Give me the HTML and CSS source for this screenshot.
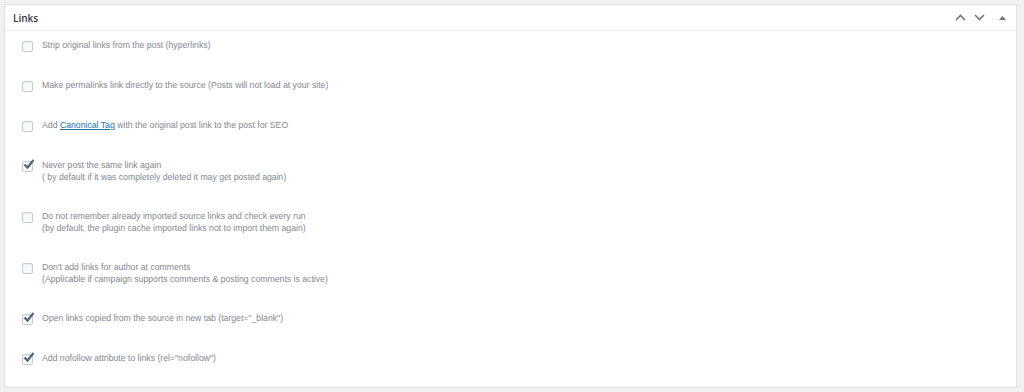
FILE: index.html
```html
<!DOCTYPE html>
<html>
<head>
<meta charset="utf-8">
<link rel="stylesheet" href="styles.css">
</head>
<body>
<div class="panel">
  <div class="panel-head">
    <h2 class="title">Links</h2>
    <div class="actions">
      <svg class="chev" width="11" height="7" viewBox="0 0 11 7"><path d="M1 6 L5.5 1.5 L10 6" fill="none" stroke="#72777c" stroke-width="1.6"/></svg>
      <svg class="chev" width="11" height="7" viewBox="0 0 11 7"><path d="M1 1 L5.5 5.5 L10 1" fill="none" stroke="#72777c" stroke-width="1.6"/></svg>
      <svg class="tri" width="7" height="4" viewBox="0 0 7 4"><path d="M0 4 L3.5 0 L7 4 Z" fill="#72777c"/></svg>
    </div>
  </div>
  <div class="panel-body">
    <div class="opt"><span class="box"></span><div class="label">Strip original links from the post (hyperlinks)</div></div>
    <div class="opt"><span class="box"></span><div class="label">Make permalinks link directly to the source (Posts will not load at your site)</div></div>
    <div class="opt"><span class="box"></span><div class="label">Add <a class="lnk" href="#">Canonical Tag</a> with the original post link to the post for SEO</div></div>
    <div class="opt"><span class="box checked"><svg width="12" height="11" viewBox="0 0 12 11"><path d="M1.5 5.5 L4.5 8.5 L10.5 1" fill="none" stroke="#50667a" stroke-width="2.2"/></svg></span><div class="label">Never post the same link again<br>( by default if it was completely deleted it may get posted again)</div></div>
    <div class="opt"><span class="box"></span><div class="label">Do not remember already imported source links and check every run<br>(by default, the plugin cache imported links not to import them again)</div></div>
    <div class="opt"><span class="box"></span><div class="label">Don't add links for author at comments<br>(Applicable if campaign supports comments &amp; posting comments is active)</div></div>
    <div class="opt"><span class="box checked"><svg width="12" height="11" viewBox="0 0 12 11"><path d="M1.5 5.5 L4.5 8.5 L10.5 1" fill="none" stroke="#50667a" stroke-width="2.2"/></svg></span><div class="label">Open links copied from the source in new tab (target="_blank")</div></div>
    <div class="opt"><span class="box checked"><svg width="12" height="11" viewBox="0 0 12 11"><path d="M1.5 5.5 L4.5 8.5 L10.5 1" fill="none" stroke="#50667a" stroke-width="2.2"/></svg></span><div class="label">Add nofollow attribute to links (rel="nofollow")</div></div>
  </div>
</div>
</body>
</html>
```
FILE: styles.css
```css
html, body {
  margin: 0;
  padding: 0;
  background: #f1f1f1;
}
body {
  padding: 4px 7px 0 4px;
  font-family: "Liberation Sans", Arial, sans-serif;
}
.panel {
  background: #fff;
  border: 1px solid #e2e2e2;
  box-shadow: 0 1px 1px rgba(0,0,0,0.05);
}
.panel-head {
  height: 25px;
  border-bottom: 1px solid #eeeeee;
  display: flex;
  align-items: center;
  justify-content: space-between;
  padding: 0 10px 0 8px;
}
.title {
  margin: 0;
  font-family: "Open Sans", sans-serif;
  font-size: 10px;
  font-weight: 600;
  color: #32373c;
}
.actions {
  display: flex;
  align-items: center;
  gap: 8px;
}
.tri {
  margin-left: 6px;
}
.panel-body {
  padding: 9px 0 22px 17px;
  display: flex;
  flex-direction: column;
  gap: 28px;
}
.opt {
  display: flex;
  align-items: flex-start;
  gap: 9px;
}
.box {
  width: 9px;
  height: 9px;
  border: 1px solid #c8ccd0;
  border-radius: 2px;
  background: #f8f9fa;
  box-shadow: inset 0 1px 1px rgba(0,0,0,0.05);
  margin-top: 1px;
  flex: none;
  position: relative;
}
.box svg {
  position: absolute;
  left: 0;
  top: -3px;
}
.label {
  font-size: 8.7px;
  line-height: 11.5px;
  color: #85898e;
}
.lnk {
  color: #2271b1;
  text-decoration: underline;
}
```
